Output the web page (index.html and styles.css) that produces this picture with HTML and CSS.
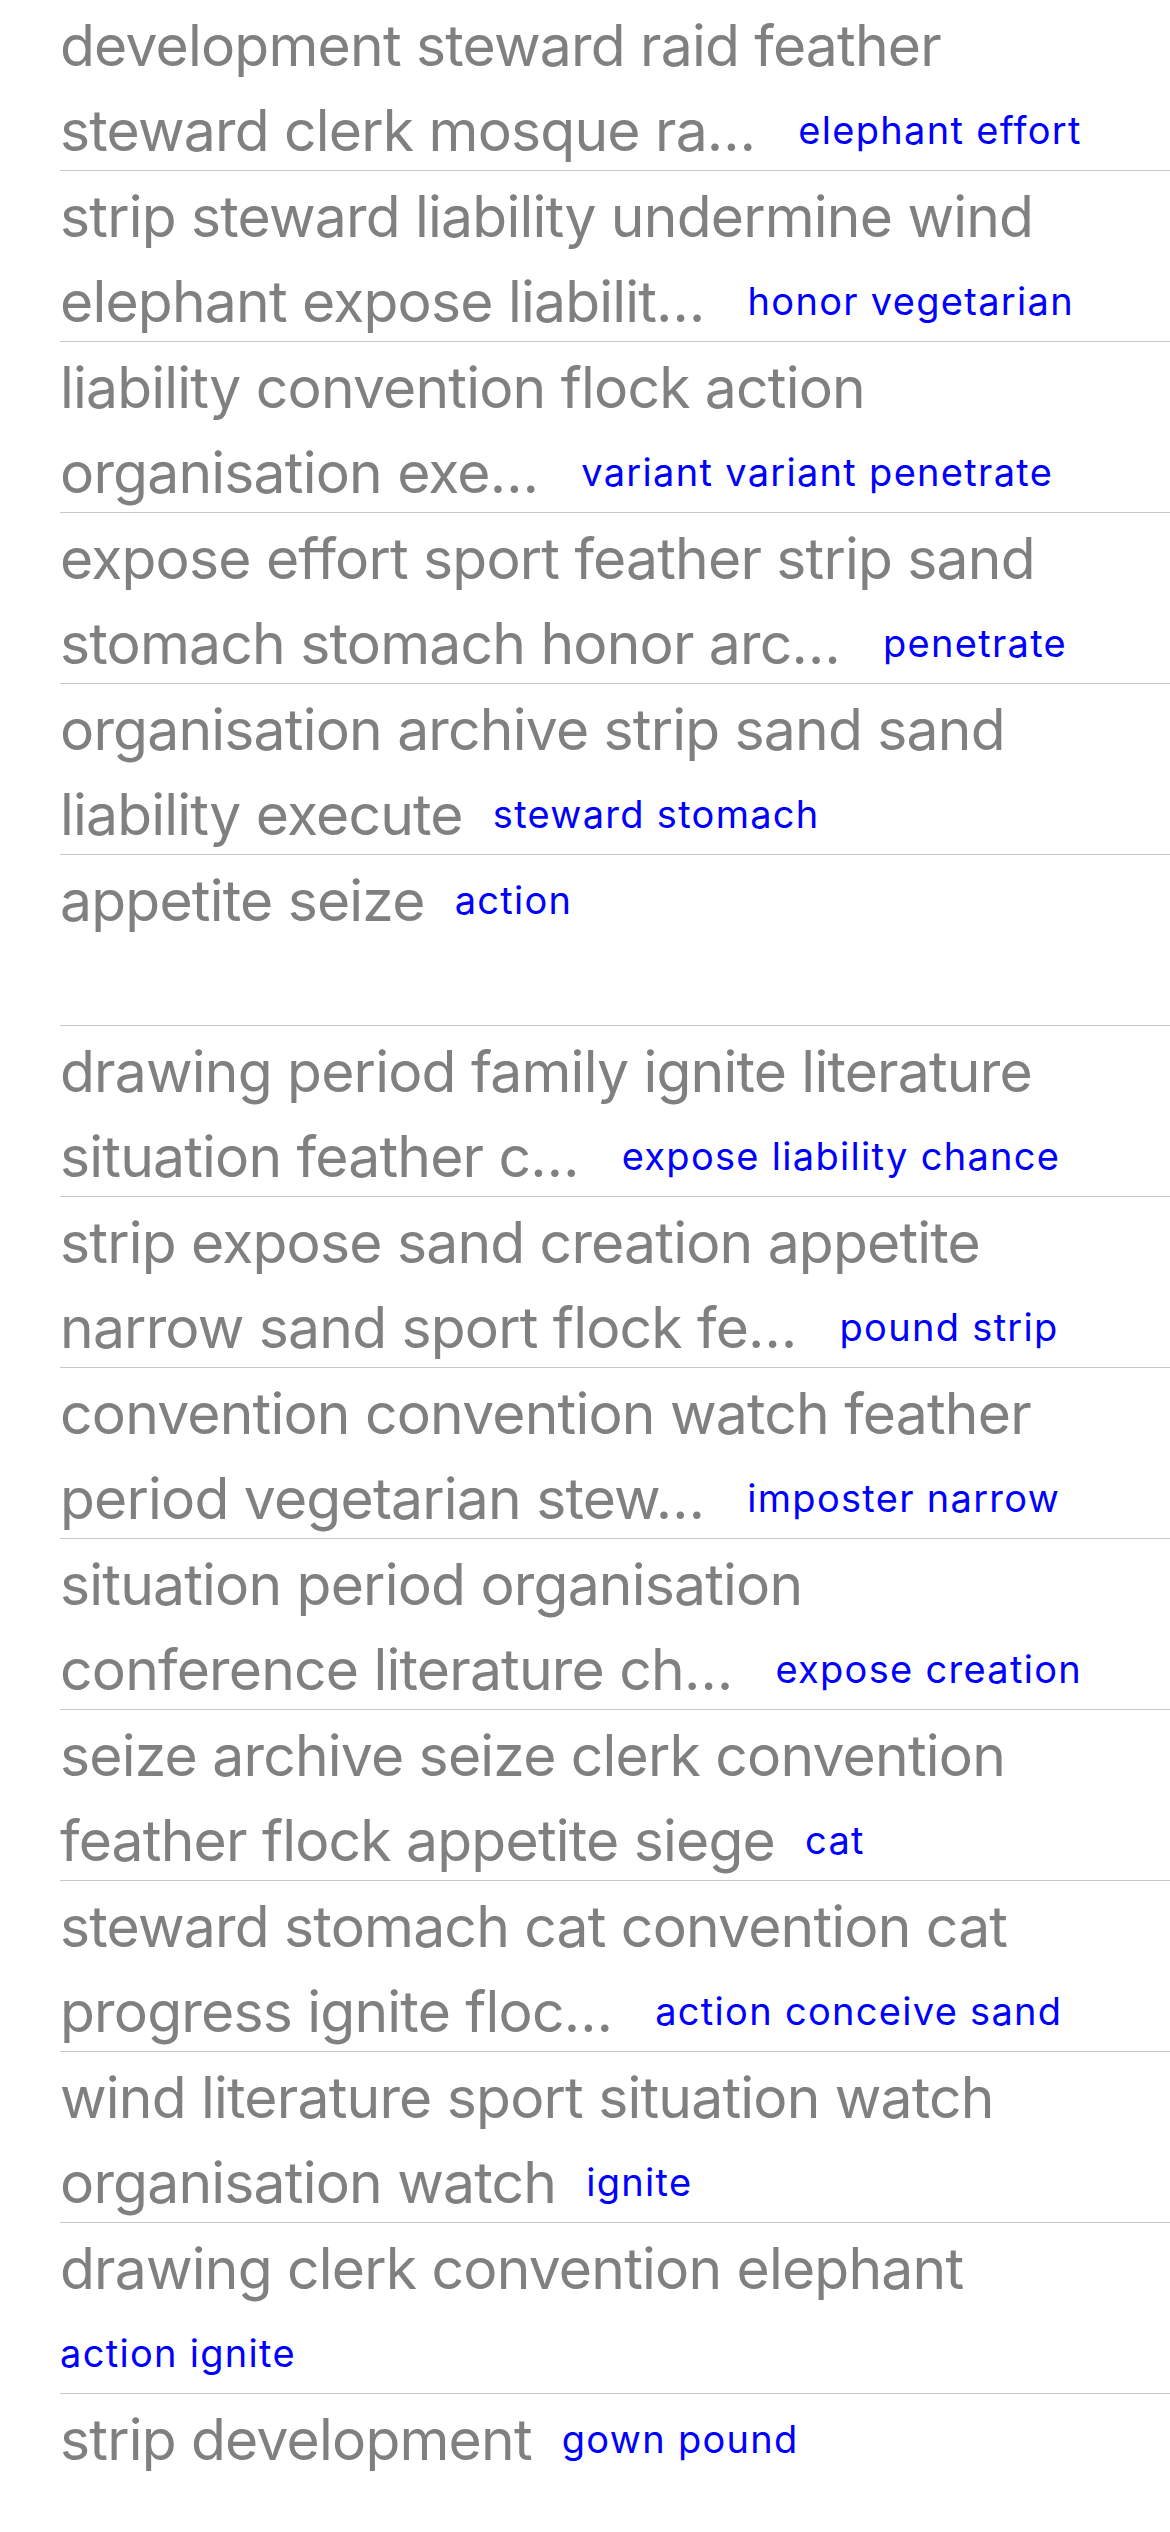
FILE: index.html
```html
<!DOCTYPE html>
<html lang="en">
<head>
<meta charset="utf-8">
<title>List</title>
<link rel="stylesheet" href="styles.css">
</head>
<body>
<ul class="list">
  <li class="row"><span class="title">development steward raid feather<br>steward clerk mosque ra…</span><span class="tag cut">elephant effort</span></li>
  <li class="row"><span class="title">strip steward liability undermine wind<br>elephant expose liabilit…</span><span class="tag cut">honor vegetarian</span></li>
  <li class="row"><span class="title">liability convention flock action<br>organisation exe…</span><span class="tag cut">variant variant penetrate</span></li>
  <li class="row"><span class="title">expose effort sport feather strip sand<br>stomach stomach honor arc…</span><span class="tag cut">penetrate</span></li>
  <li class="row"><span class="title">organisation archive strip sand sand<br>liability execute</span><span class="tag">steward stomach</span></li>
  <li class="row"><span class="title">appetite seize</span><span class="tag">action</span></li>
  <li class="row"><span class="title">drawing period family ignite literature<br>situation feather c…</span><span class="tag cut">expose liability chance</span></li>
  <li class="row"><span class="title">strip expose sand creation appetite<br>narrow sand sport flock fe…</span><span class="tag cut">pound strip</span></li>
  <li class="row"><span class="title">convention convention watch feather<br>period vegetarian stew…</span><span class="tag cut">imposter narrow</span></li>
  <li class="row"><span class="title">situation period organisation<br>conference literature ch…</span><span class="tag cut">expose creation</span></li>
  <li class="row"><span class="title">seize archive seize clerk convention<br>feather flock appetite siege</span><span class="tag">cat</span></li>
  <li class="row"><span class="title">steward stomach cat convention cat<br>progress ignite floc…</span><span class="tag cut">action conceive sand</span></li>
  <li class="row"><span class="title">wind literature sport situation watch<br>organisation watch</span><span class="tag">ignite</span></li>
  <li class="row"><span class="title">drawing clerk convention elephant<br></span><span class="tag solo">action ignite</span></li>
  <li class="row"><span class="title">strip development</span><span class="tag">gown pound</span></li>
</ul>
</body>
</html>
```

FILE: styles.css
```css
html, body {
  margin: 0;
  padding: 0;
  background: #ffffff;
  overflow: hidden;
}

body {
  height: 2532px;
  font-family: Inter, "Noto Sans", sans-serif;
}

.list {
  list-style: none;
  margin: 0;
  padding: 0 0 0 60px;
}

.row {
  box-sizing: border-box;
  height: 171px;
  padding-top: 3px;
  border-bottom: 1px solid #c8c8c8;
  white-space: nowrap;
  font-size: 57px;
  line-height: 85px;
  color: #808080;
  overflow: hidden;
}

.title {
  color: #808080;
  letter-spacing: -0.8px;
}

.tag {
  color: #0000ff;
  font-size: 38px;
  letter-spacing: 1.3px;
  vertical-align: 7px;
  margin-left: 30px;
}

.tag.cut {
  margin-left: 43px;
}

.tag.solo {
  margin-left: 0;
}
```
